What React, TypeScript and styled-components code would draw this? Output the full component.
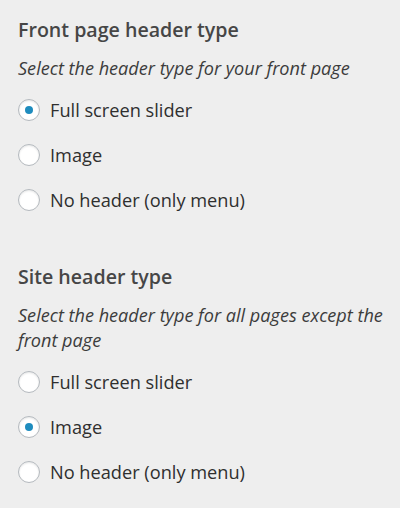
import React from "react";
import styled, { createGlobalStyle } from "styled-components";

const Global = createGlobalStyle`
  html, body { margin: 0; padding: 0; background: #eeeeee; }
  body { font-family: "Open Sans", "Noto Sans", sans-serif; color: #444; }
`;

const Page = styled.div`
  width: 400px;
  height: 508px;
  box-sizing: border-box;
  padding: 16px 8px 0 18px;
  background: #eeeeee;
  display: flex;
  flex-direction: column;
  gap: 49px;
  overflow: hidden;
`;

const Section = styled.section`
  display: flex;
  flex-direction: column;
`;

const Title = styled.h3`
  margin: 0;
  font-size: 19.6px;
  font-weight: 600;
  line-height: 28px;
  color: #464646;
`;

const Description = styled.p`
  margin: 12px 0 0 0;
  font-size: 18.1px;
  font-style: italic;
  line-height: 25px;
  color: #3c3c3c;
`;

const Options = styled.div`
  display: flex;
  flex-direction: column;
  gap: 17px;
  margin-top: 15px;
`;

const Option = styled.label`
  display: flex;
  align-items: center;
  gap: 10px;
  height: 28px;
  font-size: 18.2px;
  color: #2f2f2f;
`;

const Radio = styled.span<{ $checked?: boolean }>`
  width: 22px;
  height: 22px;
  box-sizing: border-box;
  border-radius: 50%;
  border: 1px solid #b4b9be;
  background: #fff;
  box-shadow: inset 0 1px 2px rgba(0, 0, 0, 0.1);
  display: flex;
  align-items: center;
  justify-content: center;
  flex-shrink: 0;
  &::after {
    content: "";
    width: 8px;
    height: 8px;
    border-radius: 50%;
    background: #1e8cbe;
    display: ${(p) => (p.$checked ? "block" : "none")};
  }
`;

type Group = { title: string; desc: string; selected: number };

const labels = ["Full screen slider", "Image", "No header (only menu)"];

const groups: Group[] = [
  { title: "Front page header type", desc: "Select the header type for your front page", selected: 0 },
  { title: "Site header type", desc: "Select the header type for all pages except the front page", selected: 1 },
];

export default function App() {
  return (
    <>
      <Global />
      <Page>
        {groups.map((g) => (
          <Section key={g.title}>
            <Title>{g.title}</Title>
            <Description>{g.desc}</Description>
            <Options>
              {labels.map((l, i) => (
                <Option key={l}>
                  <Radio $checked={i === g.selected} />
                  {l}
                </Option>
              ))}
            </Options>
          </Section>
        ))}
      </Page>
    </>
  );
}
